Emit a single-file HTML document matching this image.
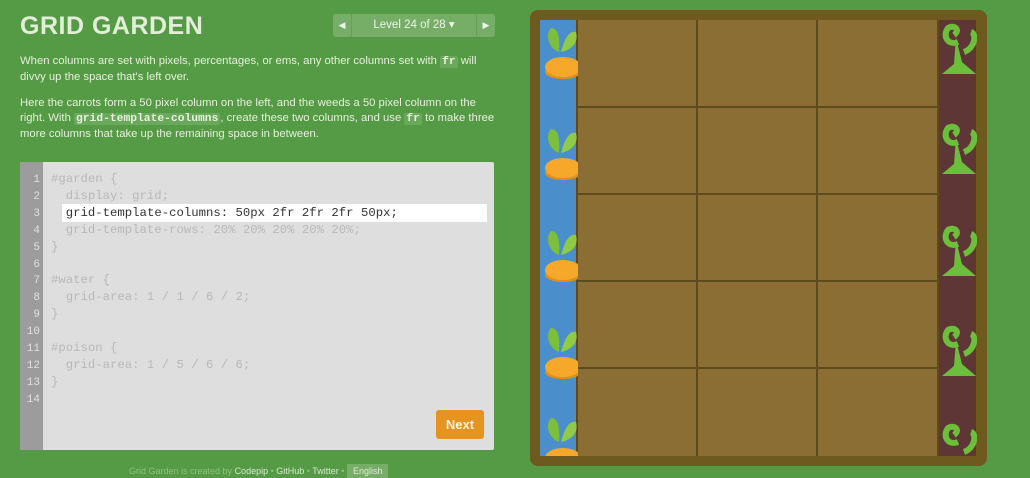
<!DOCTYPE html>
<html><head><meta charset="utf-8"><style>
*{margin:0;padding:0;box-sizing:border-box}
body{width:1030px;height:476px;background:#559a45;font-family:"Liberation Sans",sans-serif;position:relative;overflow:hidden;color:#e6f0dc}
.title{position:absolute;left:20px;top:12px;font-size:25px;font-weight:bold;color:#e3eed9;letter-spacing:0.5px}
.nav{position:absolute;left:333px;top:14px;width:162px;height:23px;background:#76ad67;border-radius:3px;font-size:11.5px;color:#eef5ea}
.nav .l,.nav .r{position:absolute;top:0;width:19px;height:23px;line-height:23px;text-align:center;font-size:9px}
.nav .l{left:0;border-right:1px solid #65a056}.nav .r{right:0;border-left:1px solid #65a056}
.nav .m{position:absolute;left:19px;right:19px;text-align:center;line-height:23px}
p{position:absolute;left:20px;width:480px;font-size:11.3px;line-height:15px;color:#e6f0dc}
code{font-family:"Liberation Mono",monospace;background:#6aa85c;padding:0 2px;font-weight:bold;border-radius:2px}
.ed{position:absolute;left:20px;top:162px;width:474px;height:288px;background:#dedede;border-radius:2px;overflow:hidden}
.gut{position:absolute;left:0;top:0;width:23px;height:288px;background:#9c9c9c}
.ln{position:absolute;left:0;width:20px;text-align:right;font-family:"Liberation Mono",monospace;font-size:11px;color:#e0e0e0;line-height:16.9px}
.cd{position:absolute;left:31px;font-family:"Liberation Mono",monospace;font-size:12.3px;color:#b8b8b8;white-space:pre}
.hl{position:absolute;left:42px;top:42px;width:425px;height:18px;background:#fff}
.next{position:absolute;left:416px;top:248px;width:48px;height:29px;background:#e4941f;border-radius:3px;color:#fff3dd;font-size:13px;font-weight:bold;text-align:center;line-height:29px}
.foot{position:absolute;left:129px;top:466px;font-size:9px;color:#8fc07f}
.foot b{color:#d7e8cf;font-weight:normal}
.foot .en{background:#76ad67;color:#e0eedb;padding:2px 6px}
.frame{position:absolute;left:530px;top:10px;width:457px;height:456px;background:#6e5a1f;border-radius:8px}
.in{position:absolute;left:540px;top:20px;width:436px;height:436px;background:#8a6e34}
.water{position:absolute;left:540px;top:20px;width:37px;height:436px;background:#4a8fcc}
.poison{position:absolute;left:938px;top:20px;width:38px;height:436px;background:#5e3636}
.vl{position:absolute;top:20px;width:2px;height:436px;background:#5e4b1d}
.hr{position:absolute;left:577px;width:361px;height:2px;background:#5e4b1d}
.car{position:absolute;left:544px;width:34px}
.wd{position:absolute;left:940px;width:37px}
</style></head><body>
<div class="title">GRID GARDEN</div>
<div class="nav"><div class="l">◀</div><div class="m">Level 24 of 28 ▾</div><div class="r">▶</div></div>
<p style="top:54px">When columns are set with pixels, percentages, or ems, any other columns set with <code>fr</code> will divvy up the space that's left over.</p>
<p style="top:96px">Here the carrots form a 50 pixel column on the left, and the weeds a 50 pixel column on the right. With <code>grid-template-columns</code>, create these two columns, and use <code>fr</code> to make three more columns that take up the remaining space in between.</p>
<div class="ed"><div class="gut"></div><div class="hl"></div>
<div class="ln" style="top:10px">1<br>2<br>3<br>4<br>5<br>6<br>7<br>8<br>9<br>10<br>11<br>12<br>13<br>14</div>
<div class="cd" style="top:9px;line-height:16.9px">#garden {
  display: grid;
  <span style="color:#333">grid-template-columns: 50px 2fr 2fr 2fr 50px;</span>
  grid-template-rows: 20% 20% 20% 20% 20%;
}

#water {
  grid-area: 1 / 1 / 6 / 2;
}

#poison {
  grid-area: 1 / 5 / 6 / 6;
}</div>
<div class="next">Next</div></div>
<div class="foot">Grid Garden is created by <b>Codepip</b> • <b>GitHub</b> • <b>Twitter</b> • <span class="en">English</span></div>
<div class="frame"></div><div class="in"></div><div class="water"></div><div class="poison"></div>
<div class="vl" style="left:576px"></div><div class="vl" style="left:696px"></div><div class="vl" style="left:816px"></div><div class="vl" style="left:937px"></div>
<div class="hr" style="top:106px"></div><div class="hr" style="top:193px"></div><div class="hr" style="top:280px"></div><div class="hr" style="top:367px"></div>
<svg class="car" style="top:22px" height="60" viewBox="0 0 34 60"><path d="M15 30C4 26 1 12 7 6 15 6 16 18 15 30Z" fill="#7bbf3a"/><path d="M17 30C20 18 25 8 32 10 35 22 26 28 17 30Z" fill="#8fcb45"/><ellipse cx="19" cy="50" rx="18" ry="7" fill="#e28f1a"/><ellipse cx="19" cy="45" rx="18" ry="10" fill="#f6a82a"/></svg>
<svg class="car" style="top:123px" height="60" viewBox="0 0 34 60"><path d="M15 30C4 26 1 12 7 6 15 6 16 18 15 30Z" fill="#7bbf3a"/><path d="M17 30C20 18 25 8 32 10 35 22 26 28 17 30Z" fill="#8fcb45"/><ellipse cx="19" cy="50" rx="18" ry="7" fill="#e28f1a"/><ellipse cx="19" cy="45" rx="18" ry="10" fill="#f6a82a"/></svg>
<svg class="car" style="top:225px" height="60" viewBox="0 0 34 60"><path d="M15 30C4 26 1 12 7 6 15 6 16 18 15 30Z" fill="#7bbf3a"/><path d="M17 30C20 18 25 8 32 10 35 22 26 28 17 30Z" fill="#8fcb45"/><ellipse cx="19" cy="50" rx="18" ry="7" fill="#e28f1a"/><ellipse cx="19" cy="45" rx="18" ry="10" fill="#f6a82a"/></svg>
<svg class="car" style="top:322px" height="60" viewBox="0 0 34 60"><path d="M15 30C4 26 1 12 7 6 15 6 16 18 15 30Z" fill="#7bbf3a"/><path d="M17 30C20 18 25 8 32 10 35 22 26 28 17 30Z" fill="#8fcb45"/><ellipse cx="19" cy="50" rx="18" ry="7" fill="#e28f1a"/><ellipse cx="19" cy="45" rx="18" ry="10" fill="#f6a82a"/></svg>
<svg class="car" style="top:412px" height="44" viewBox="0 0 34 44"><path d="M15 30C4 26 1 12 7 6 15 6 16 18 15 30Z" fill="#7bbf3a"/><path d="M17 30C20 18 25 8 32 10 35 22 26 28 17 30Z" fill="#8fcb45"/><ellipse cx="19" cy="46" rx="18" ry="10" fill="#f6a82a"/></svg>
<svg class="wd" style="top:20px" height="62" viewBox="0 0 37 62"><path d="M18 22C8 26 2 16 8 8 14 4 21 10 14 15M24 32C35 28 37 14 31 12" stroke="#6cbf3a" stroke-width="6" fill="none"/><path d="M16 18L22 42 36 54 2 54 14 44Z" fill="#6cbf3a"/></svg>
<svg class="wd" style="top:120px" height="62" viewBox="0 0 37 62"><path d="M18 22C8 26 2 16 8 8 14 4 21 10 14 15M24 32C35 28 37 14 31 12" stroke="#6cbf3a" stroke-width="6" fill="none"/><path d="M16 18L22 42 36 54 2 54 14 44Z" fill="#6cbf3a"/></svg>
<svg class="wd" style="top:222px" height="62" viewBox="0 0 37 62"><path d="M18 22C8 26 2 16 8 8 14 4 21 10 14 15M24 32C35 28 37 14 31 12" stroke="#6cbf3a" stroke-width="6" fill="none"/><path d="M16 18L22 42 36 54 2 54 14 44Z" fill="#6cbf3a"/></svg>
<svg class="wd" style="top:322px" height="62" viewBox="0 0 37 62"><path d="M18 22C8 26 2 16 8 8 14 4 21 10 14 15M24 32C35 28 37 14 31 12" stroke="#6cbf3a" stroke-width="6" fill="none"/><path d="M16 18L22 42 36 54 2 54 14 44Z" fill="#6cbf3a"/></svg>
<svg class="wd" style="top:420px" height="36" viewBox="0 0 37 36"><path d="M18 22C8 26 2 16 8 8 14 4 21 10 14 15M24 32C35 28 37 14 31 12" stroke="#6cbf3a" stroke-width="6" fill="none"/></svg>
</body></html>
